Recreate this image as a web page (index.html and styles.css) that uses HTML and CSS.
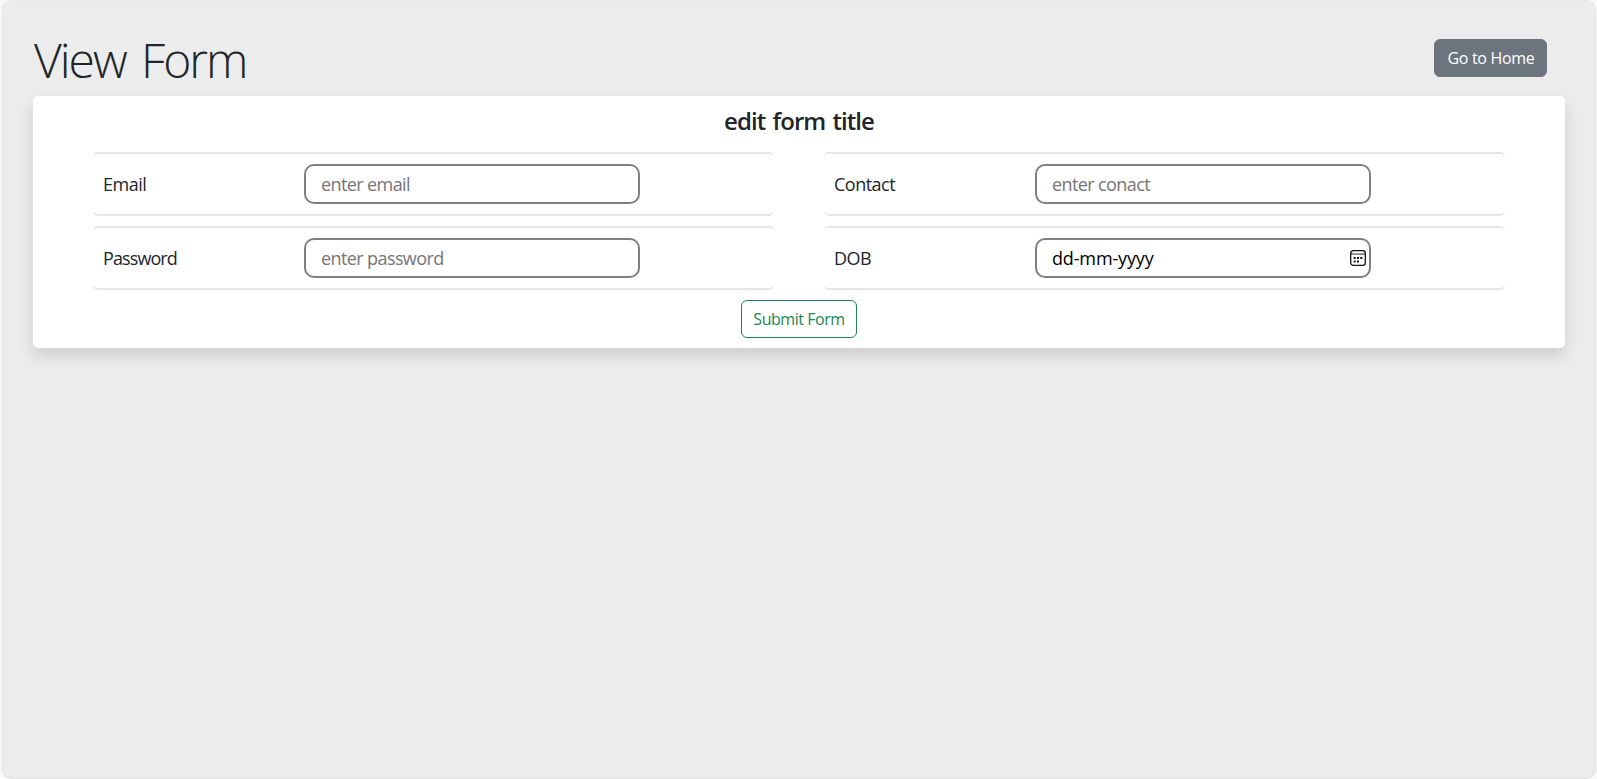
FILE: index.html
```html
<!DOCTYPE html>
<html lang="en">
<head>
<meta charset="utf-8">
<title>View Form</title>
<link rel="stylesheet" href="styles.css">
</head>
<body>
<main class="page">
  <header class="page-header">
    <h1 class="page-title">View Form</h1>
    <button class="btn btn-home" type="button">Go to Home</button>
  </header>
  <form class="card">
    <h2 class="form-title">edit form title</h2>
    <div class="fields">
      <div class="field">
        <label class="label" for="email">Email</label>
        <input class="input" id="email" type="email" placeholder="enter email">
      </div>
      <div class="field">
        <label class="label" for="contact">Contact</label>
        <input class="input" id="contact" type="text" placeholder="enter conact">
      </div>
      <div class="field">
        <label class="label label-password" for="password">Password</label>
        <input class="input" id="password" type="password" placeholder="enter password">
      </div>
      <div class="field">
        <label class="label" for="dob">DOB</label>
        <div class="input date">
          <span class="date-text" id="dob">dd-mm-yyyy</span>
          <svg class="calendar" viewBox="0 0 16 16" aria-hidden="true">
            <path d="M1 4h14" stroke="#777" stroke-width="1.6"/>
            <rect x=".7" y=".7" width="14.6" height="14.6" rx="2.6" fill="none" stroke="#111" stroke-width="1.3"/>
            <path d="M3.7 7h2v2h-2zM7 7h2v2H7zM10.3 7h2v2h-2zM3.7 10.4h2v2h-2zM7 10.4h2v2H7z" fill="#111"/>
          </svg>
        </div>
      </div>
    </div>
    <button class="btn btn-submit" type="button">Submit Form</button>
  </form>
</main>
</body>
</html>
```
FILE: styles.css
```css
* { box-sizing: border-box; }

body {
  margin: 0;
  background: #f8f8f8;
  color: #212529;
  font-family: "Segoe UI", "Open Sans", "Noto Sans", sans-serif;
}

.page {
  height: 779px;
  margin: 0 1px 0 2px;
  padding: 31px 30px 0;
  border: 1px solid #e2e2e2;
  border-top-color: #e8e8e8;
  border-radius: 10px;
  background: #ececec;
}

.page-header {
  display: flex;
  justify-content: space-between;
  align-items: flex-start;
  height: 64px;
  padding: 0 18px 0 1px;
}

.page-title {
  margin: 0;
  font-size: 48px;
  line-height: 56px;
  font-weight: 300;
  letter-spacing: -2px;
  word-spacing: 5px;
}

.btn {
  display: block;
  height: 38px;
  padding: 0;
  border-radius: 6px;
  font: 400 16px/24px "Segoe UI", "Open Sans", "Noto Sans", sans-serif;
  white-space: nowrap;
}

.btn-home {
  width: 113px;
  margin-top: 7px;
  padding-left: 1px;
  border: 1px solid #6c757d;
  background: #6c757d;
  color: #fff;
  letter-spacing: -.3px;
}

.card {
  height: 252px;
  padding: 10px 60px;
  border-radius: 5px;
  background: #fff;
  box-shadow: 0 8px 16px rgba(0, 0, 0, .13);
}

.form-title {
  margin: 0 0 17px;
  text-align: center;
  font-size: 24px;
  line-height: 29px;
  font-weight: 600;
  letter-spacing: -.95px;
  word-spacing: 2px;
}

.fields {
  display: grid;
  grid-template-columns: 1fr 1fr;
  gap: 10px 50px;
}

.field {
  display: flex;
  align-items: center;
  height: 64px;
  padding: 0 10px;
  border: solid #e6e6e6;
  border-width: 2px 0;
  border-radius: 5px;
}

.label {
  width: 201px;
  font-size: 18px;
  line-height: 27px;
  letter-spacing: -.5px;
}

.label-password { letter-spacing: -.9px; }

.input {
  width: 336px;
  height: 40px;
  padding: 0 15px;
  border: 2px solid #808080;
  border-radius: 10px;
  background: #fff;
  color: #000;
  font: 400 18px/27px "Segoe UI", "Open Sans", "Noto Sans", sans-serif;
  letter-spacing: -.6px;
}

.input::placeholder { color: #757575; }

.date {
  display: flex;
  align-items: center;
  justify-content: space-between;
  padding-right: 3px;
  letter-spacing: -.15px;
}

.calendar {
  width: 16px;
  height: 16px;
}

.btn-submit {
  width: 116px;
  margin: 10px auto 0;
  border: 1px solid #198754;
  background: #fff;
  color: #198754;
  letter-spacing: -.45px;
}
```
